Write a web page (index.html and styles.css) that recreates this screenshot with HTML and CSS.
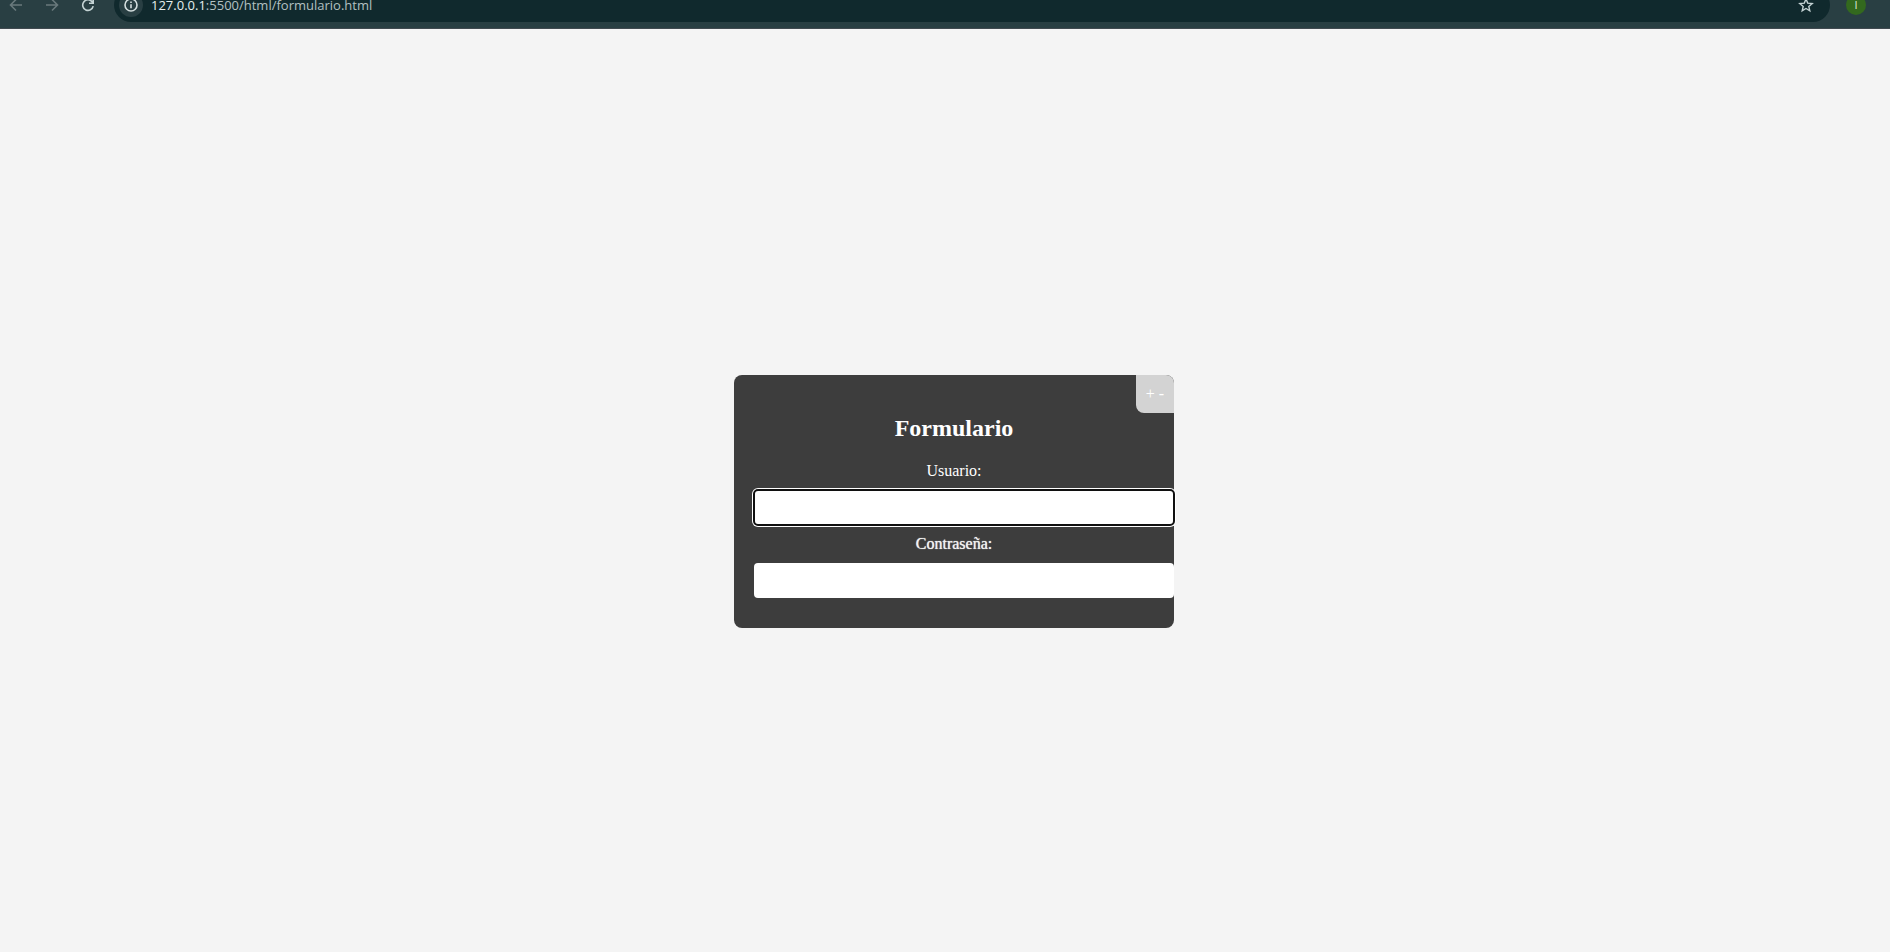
FILE: index.html
```html
<!DOCTYPE html>
<html lang="es">
<head>
<meta charset="utf-8">
<title>Formulario</title>
<link rel="stylesheet" href="styles.css">
</head>
<body>
<header class="toolbar">
  <nav class="nav">
    <button class="nav-btn dim" type="button" aria-label="Atrás"><svg width="16" height="16" viewBox="0 0 16 16"><path d="M14 8H3M8 2.500L2.500 8L8 13.500"/></svg></button>
    <button class="nav-btn dim" type="button" aria-label="Adelante"><svg width="16" height="16" viewBox="0 0 16 16"><path d="M2 8H13M8 2.500L13.500 8L8 13.500"/></svg></button>
    <button class="nav-btn" type="button" aria-label="Recargar"><svg width="16" height="16" viewBox="0 0 16 16"><path d="M13.200 9.200A5.300 5.300 0 1 1 12 4.600L13 5.800M13.200 2V6.300H9"/></svg></button>
  </nav>
  <div class="omnibox">
    <button class="info" type="button" aria-label="Información del sitio"><svg width="16" height="16" viewBox="0 0 16 16"><circle cx="8" cy="8" r="6"/><path d="M8 7.300V11.300M8 4.600V6.100"/></svg></button>
    <span class="url"><span class="host">127.0.0.1</span>:5500/html/formulario.html</span>
    <button class="star" type="button" aria-label="Favorito"><svg width="16" height="16" viewBox="0 0 16 16"><path d="M8 2L9.700 6.100L14.200 6.500L10.800 9.400L11.800 13.800L8 11.500L4.200 13.800L5.200 9.400L1.800 6.500L6.300 6.100Z"/></svg></button>
  </div>
  <button class="avatar" type="button">I</button>
</header>
<main class="page">
  <form class="card">
    <button class="zoom" type="button">+ -</button>
    <h2 class="title">Formulario</h2>
    <label class="label" for="usuario">Usuario:</label>
    <input class="field active" id="usuario" type="text">
    <label class="label strong" for="clave">Contraseña:</label>
    <input class="field" id="clave" type="password">
  </form>
</main>
</body>
</html>
```
FILE: styles.css
```css
* { box-sizing: border-box; }

body {
  margin: 0;
  min-height: 100vh;
  display: flex;
  flex-direction: column;
  background: #f4f4f4;
  font-family: "Liberation Serif", "Times New Roman", serif;
  font-size: 16px;
}

button {
  border: 0;
  padding: 0;
  background: none;
  font: inherit;
}

svg {
  display: block;
  fill: none;
  stroke: currentColor;
  stroke-width: 1.6;
}

/* Browser bar, its upper part scrolled out of view */
.toolbar {
  display: flex;
  align-items: flex-end;
  height: 29px;
  padding: 0 24px 6px 0;
  overflow: hidden;
  background: #293f43;
  border-bottom: 1px solid #414a50;
  font-family: "Open Sans", "Noto Sans", sans-serif;
  font-size: 13px;
}

.nav {
  display: flex;
  gap: 4px;
  margin-right: 10px;
}

.nav-btn {
  width: 32px;
  height: 34px;
  display: grid;
  place-items: center;
  color: #c4d3d4;
}

.nav-btn.dim { color: #69797c; }

.omnibox {
  flex: 1;
  display: flex;
  align-items: center;
  height: 34px;
  padding: 0 16px 0 5px;
  border-radius: 17px;
  background: #10292d;
  color: #b3c0c1;
}

.info {
  width: 24px;
  height: 24px;
  display: grid;
  place-items: center;
  border-radius: 50%;
  background: #293f43;
  color: #d5dfdf;
}

.url {
  flex: 1;
  padding-left: 8px;
  line-height: 10px;
}

.host { color: #e6eeee; }

.star { color: #c4d3d4; }
.star svg { stroke-width: 1.4; }

.avatar {
  width: 20px;
  height: 20px;
  margin: 0 0 7px 16px;
  border-radius: 50%;
  background: #33691e;
  color: #dde8d8;
  font-size: 11px;
  line-height: 10px;
}

.page {
  flex: 1;
  display: grid;
  place-items: center;
  padding: 22px 0 0 18px;
}

.card {
  position: relative;
  width: 440px;
  padding: 20px;
  border-radius: 8px;
  background: #3d3d3d;
  color: #fff;
  text-align: center;
}

.zoom {
  position: absolute;
  top: 0;
  right: 0;
  padding: 10px;
  border-radius: 0 8px 0 8px;
  background: #d3d3d3;
  color: #fff;
  line-height: 18px;
}

.title {
  margin: 20px 0;
  font-size: 24px;
  line-height: 27px;
}

.label {
  display: block;
  line-height: 18px;
}

.label.strong {
  color: #f3f3f3;
  text-shadow: 0 0 1px #f3f3f3;
}

.field {
  display: block;
  width: calc(100% + 20px);
  height: 35px;
  margin: 10px 0;
  padding: 10px;
  border: 0;
  border-radius: 4px;
  background: #fff;
}

.field.active,
.field:focus {
  outline: 2px solid #101010;
  outline-offset: -1px;
  box-shadow: 0 0 0 2px #fff;
}
```
